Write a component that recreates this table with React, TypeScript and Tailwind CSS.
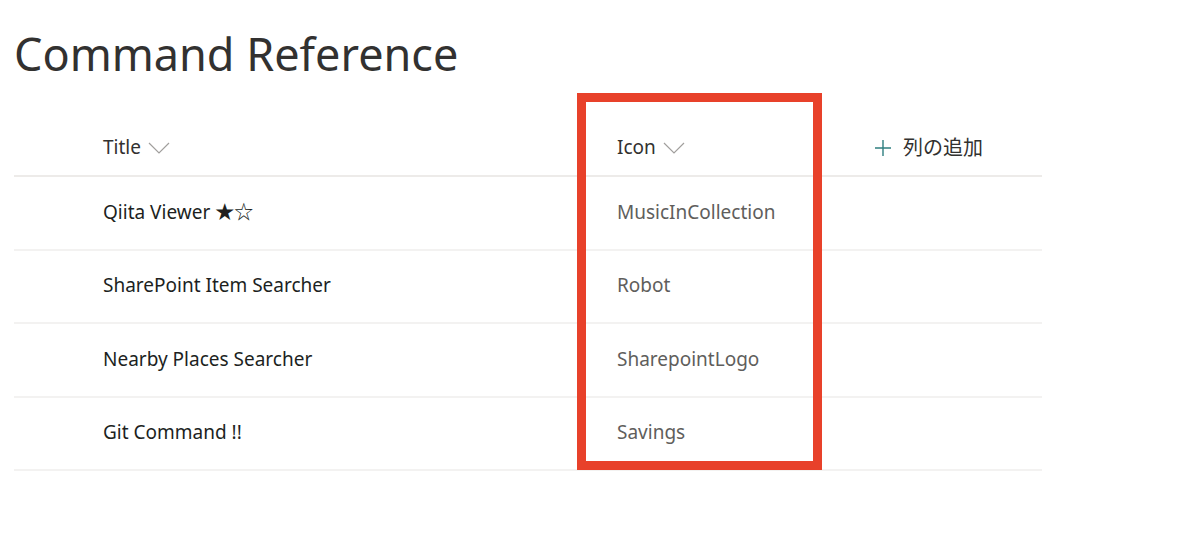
const font = { fontFamily: '"Noto Sans", "Noto Sans CJK JP", sans-serif' };

const rows = [
  { title: "Qiita Viewer ★☆", icon: "MusicInCollection" },
  { title: "SharePoint Item Searcher", icon: "Robot" },
  { title: "Nearby Places Searcher", icon: "SharepointLogo" },
  { title: "Git Command !!", icon: "Savings" },
];

function Chevron() {
  return (
    <svg width="22" height="12" viewBox="0 0 22 12" className="ml-[7px]">
      <path d="M1 1 L11 11 L21 1" fill="none" stroke="#a19f9d" strokeWidth="1.2" />
    </svg>
  );
}

function Plus() {
  return (
    <svg width="16" height="16" viewBox="0 0 16 16">
      <path d="M8 0 V16 M0 8 H16" stroke="#2f7f80" strokeWidth="1.4" />
    </svg>
  );
}

export default function App() {
  return (
    <div className="relative w-[1200px] h-[535px] bg-white text-[#323130]" style={font}>
      <div className="px-[14px] pt-[24px]">
        <h1 className="text-[45px] leading-[60px] text-[#323130]">Command Reference</h1>
        <div className="w-[1028px] mt-[36px]">
          <div className="flex items-center h-[57px] border-b-2 border-[#edebe9] text-[19px]">
            <div className="w-[603px] pl-[89px] flex items-center">
              Title
              <Chevron />
            </div>
            <div className="w-[258px] flex items-center">
              Icon
              <Chevron />
            </div>
            <div className="flex items-center gap-[12px]">
              <Plus />
              <span className="text-[20px]">列の追加</span>
            </div>
          </div>
          {rows.map((r) => (
            <div key={r.title} className="flex items-center h-[73.5px] pb-[2px] border-b-2 border-[#f3f2f1] text-[19px]">
              <div className="w-[603px] pl-[89px] text-[#201f1e]">{r.title}</div>
              <div className="w-[258px] text-[#605e5c]">{r.icon}</div>
            </div>
          ))}
        </div>
      </div>
      <div className="absolute left-[577px] top-[93px] w-[245px] h-[377px] border-[9px] border-[#e8412a]" />
    </div>
  );
}
